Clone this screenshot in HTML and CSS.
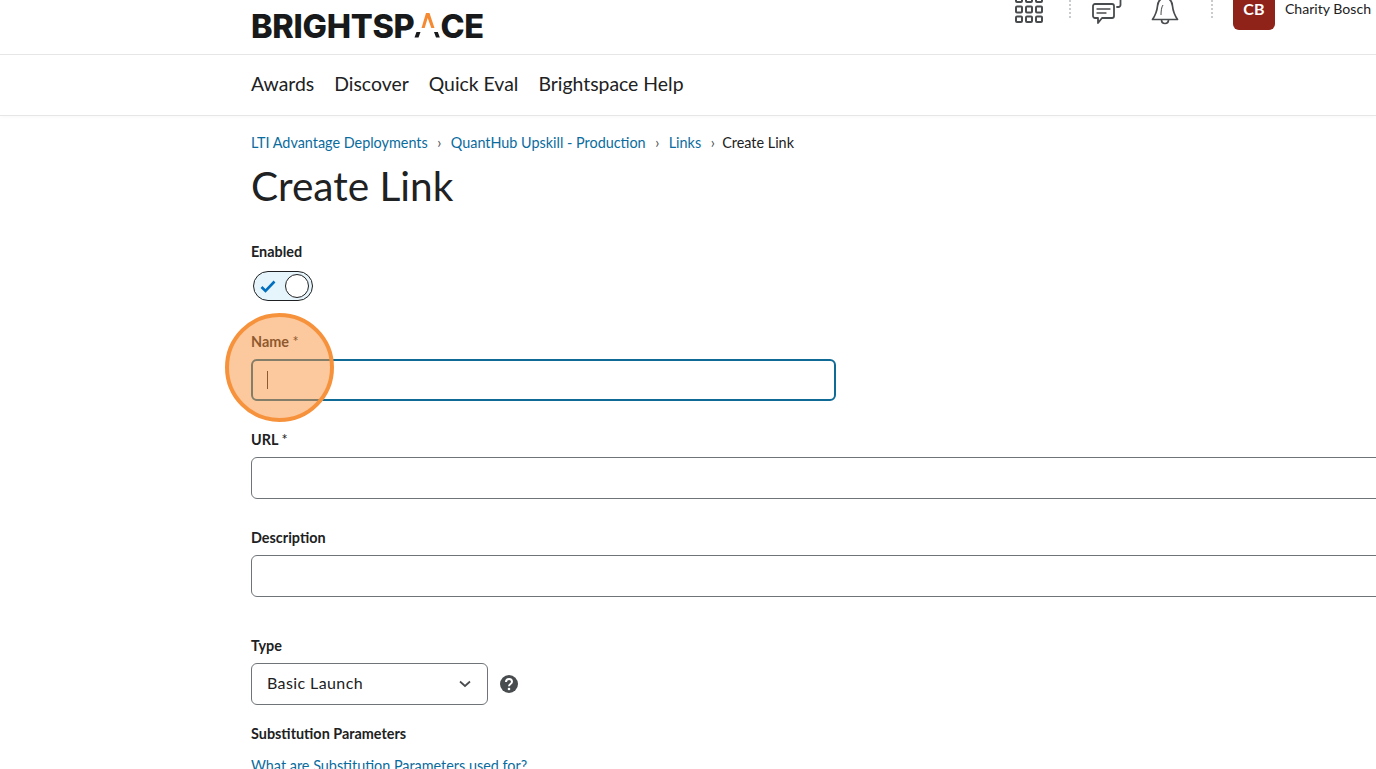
FILE: index.html
```html
<!DOCTYPE html>
<html lang="en">
  <head>
    <meta charset="UTF-8" />
    <meta name="viewport" content="width=device-width, initial-scale=1.0" />
    <title>Create Link</title>
    <link rel="stylesheet" href="styles.css">
  </head>
  <body>
    <header class="topbar">
      <div class="logo">
        <span>BRIGHTSP</span>
        <svg class="logo-a" width="26" height="26" viewBox="0 0 26 26" aria-hidden="true">
          <path d="M12 0h3.500l5 15h-3.200L13.700 5 10.700 15H7.500z" fill="#f58a33" />
          <path d="M2.500 19h4l-2 5.500H.5zM20 19h3.800l2 5.500H22z" fill="#17191a" />
        </svg>
        <span>CE</span>
      </div>
      <div class="tools">
        <svg class="tool-grid" width="28" height="24" viewBox="0 0 28 24" fill="none" stroke="#494c4e" stroke-width="2" aria-hidden="true">
          <rect x="1" y="-4" width="6" height="6" rx="1" /><rect x="11" y="-4" width="6" height="6" rx="1" /><rect x="21" y="-4" width="6" height="6" rx="1" />
          <rect x="1" y="6.500" width="6" height="6" rx="1" /><rect x="11" y="6.500" width="6" height="6" rx="1" /><rect x="21" y="6.500" width="6" height="6" rx="1" />
          <rect x="1" y="16.500" width="6" height="5.500" rx="1" /><rect x="11" y="16.500" width="6" height="5.500" rx="1" /><rect x="21" y="16.500" width="6" height="5.500" rx="1" />
        </svg>
        <span class="dots dots-first"></span>
        <svg class="tool-chat" width="32" height="25" viewBox="0 0 32 25" fill="none" stroke="#494c4e" stroke-width="1.800" stroke-linejoin="round" stroke-linecap="round" aria-hidden="true">
          <path d="M4 4h17a2 2 0 0 1 2 2v10a2 2 0 0 1-2 2H11l-4 5v-5H4a2 2 0 0 1-2-2V6a2 2 0 0 1 2-2z" />
          <path d="M6 9h13M6 13h9" stroke-width="1.300" />
          <path d="M29.500 0v5a2 2 0 0 1-2 2H26" />
        </svg>
        <svg class="tool-bell" width="28" height="25" viewBox="0 0 28 25" fill="none" stroke="#494c4e" stroke-width="1.700" stroke-linejoin="round" aria-hidden="true">
          <path d="M14 -2c5 0 7 3 7.500 8 .5 5 2 9 5 13.500H1.500c3-4.500 4.500-8.500 5-13.500C7 1 9 -2 14 -2z" />
          <path d="M10.500 19.500c0 3 1.500 4 3.500 4s3.500-1 3.500-4" />
          <path d="M10 15c0-4 .5-8 2-10" stroke-width="1" />
        </svg>
        <span class="dots dots-second"></span>
        <span class="avatar">CB</span>
        <span class="username">Charity Bosch</span>
      </div>
    </header>

    <nav class="mainnav">
      <a href="#">Awards</a>
      <a href="#">Discover</a>
      <a href="#">Quick Eval</a>
      <a href="#">Brightspace Help</a>
    </nav>

    <main class="content">
      <div class="crumbs">
        <a href="#">LTI Advantage Deployments</a><span class="sep">›</span><a href="#">QuantHub Upskill - Production</a><span class="sep">›</span><a href="#">Links</a><span class="sep">›</span><span class="crumb-current">Create Link</span>
      </div>
      <h1>Create Link</h1>

      <form class="link-form">
        <div class="field field-toggle">
          <label>Enabled</label>
          <div class="toggle">
            <svg width="16" height="13" viewBox="0 0 16 13" fill="none" stroke="#006fbf" stroke-width="2.600" aria-hidden="true">
              <path d="M1.500 7l4 4 9-9.500" />
            </svg>
            <span class="knob"></span>
          </div>
        </div>

        <div class="field">
          <label>Name <span class="req">*</span></label>
          <div class="input input-focus"><span class="caret"></span></div>
        </div>

        <div class="field">
          <label>URL <span class="req">*</span></label>
          <div class="input input-wide"></div>
        </div>

        <div class="field field-desc">
          <label>Description</label>
          <div class="input input-wide"></div>
        </div>

        <div class="field field-type">
          <label>Type</label>
          <div class="type-row">
            <div class="select">
              <span class="select-text">Basic Launch</span>
              <svg width="12" height="8" viewBox="0 0 12 8" fill="none" stroke="#494c4e" stroke-width="1.700" aria-hidden="true">
                <path d="M1 1.500l5 4.500 5-4.500" />
              </svg>
            </div>
            <svg class="help" width="18" height="18" viewBox="0 0 18 18" aria-hidden="true">
              <circle cx="9" cy="9" r="9" fill="#494c4e" />
              <path d="M6 7c0-2 1.400-3 3.100-3S12 5 12 6.800c0 2.300-3 2.200-3 4.400" fill="none" stroke="#fff" stroke-width="2" />
              <circle cx="9" cy="14" r="1.300" fill="#fff" />
            </svg>
          </div>
        </div>

        <div class="field-sub">
          <label>Substitution Parameters</label>
          <a href="#">What are Substitution Parameters used for?</a>
        </div>
      </form>
    </main>

    <div class="spotlight"></div>
  </body>
</html>
```

FILE: styles.css
```css
html,
body {
  height: 100%;
}

body {
  margin: 0;
  overflow: hidden;
  font-family: Lato, "Open Sans", sans-serif;
  color: #202122;
  background: #fff;
}

a {
  color: #0a6c9e;
  text-decoration: none;
}

.topbar {
  height: 54px;
  padding-left: 251px;
  display: flex;
  align-items: flex-start;
  border-bottom: 1px solid #e6e6e6;
  overflow: hidden;
}

.logo {
  display: flex;
  align-items: flex-end;
  height: 38px;
  font-family: Inter, "Liberation Sans", sans-serif;
  font-size: 32.500px;
  font-weight: 800;
  line-height: 33px;
  letter-spacing: -0.3px;
  color: #17191a;
}

.logo span {
  margin-bottom: -5px;
}

.logo-a {
  margin-bottom: -1px;
}

.tools {
  margin-left: auto;
  margin-right: 5px;
  display: flex;
  align-items: flex-start;
}

.dots {
  width: 2px;
  height: 20px;
  background: repeating-linear-gradient(#c9cccf 0 2px, transparent 2px 4px);
}

.dots-first {
  margin: 0 20px 0 26px;
}

.tool-bell {
  margin-left: 28px;
}

.dots-second {
  margin: 0 20px 0 32px;
}

.avatar {
  width: 42px;
  height: 40px;
  margin-top: -10px;
  padding-top: 9px;
  box-sizing: border-box;
  background: #8f2219;
  color: #fff;
  border-radius: 0 0 6px 6px;
  font-size: 16px;
  font-weight: 700;
  text-align: center;
}

.username {
  margin-left: 10px;
  font-size: 14.100px;
  line-height: 18px;
}

.mainnav {
  height: 61px;
  padding: 0 0 4px 251px;
  box-sizing: border-box;
  display: flex;
  align-items: center;
  gap: 20px;
  background: #fff;
  border-bottom: 1px solid #e6e6e6;
  box-shadow: 0 2px 3px rgba(0, 0, 0, 0.02);
}

.mainnav a {
  color: #202122;
  font-size: 19.400px;
}

.content {
  padding: 18px 0 0 251px;
}

.crumbs {
  font-size: 14.400px;
  line-height: 18px;
}

.sep {
  margin: 0 9.500px;
  color: #494c4e;
}

.crumb-current {
  margin-left: -2px;
}

h1 {
  margin: 7px 0 0;
  font-size: 40.600px;
  font-weight: 400;
  line-height: 54px;
}

.link-form {
  margin-top: 30px;
}

label {
  display: block;
  font-size: 14.400px;
  font-weight: 700;
  line-height: 18px;
  margin-bottom: 8px;
}

.req {
  font-weight: 400;
}

.field {
  margin-bottom: 30px;
}

.field-toggle {
  margin-bottom: 32px;
}

.field-toggle label {
  margin-bottom: 10px;
}

.field-desc {
  margin-bottom: 40px;
}

.field-type {
  margin-bottom: 20px;
}

.toggle {
  width: 60px;
  height: 30px;
  margin-left: 2px;
  padding: 0 3px 0 6px;
  box-sizing: border-box;
  display: flex;
  align-items: center;
  justify-content: space-between;
  border: 1px solid #202122;
  border-radius: 15px;
  background: #e6f4fb;
}

.knob {
  width: 22px;
  height: 22px;
  border: 1px solid #202122;
  border-radius: 50%;
  background: #fff;
}

.input {
  height: 42px;
  box-sizing: border-box;
  border: 1px solid #6e7477;
  border-radius: 6px;
  background: #fff;
}

.input-focus {
  width: 585px;
  padding: 10px 0 0 14px;
  border: 2px solid #0f6a96;
}

.input-wide {
  width: 1300px;
}

.caret {
  display: block;
  width: 1px;
  height: 18px;
  background: #202122;
}

.type-row {
  display: flex;
  align-items: center;
  gap: 12px;
}

.select {
  width: 237px;
  height: 42px;
  box-sizing: border-box;
  padding: 0 16px 0 15px;
  display: flex;
  align-items: center;
  justify-content: space-between;
  border: 1px solid #6e7477;
  border-radius: 6px;
  font-size: 16px;
  letter-spacing: 0.4px;
}

.select-text {
  margin-bottom: 3px;
}

.field-sub a {
  display: block;
  margin-top: 14px;
  font-size: 14.400px;
  line-height: 18px;
}

.spotlight {
  position: absolute;
  left: 225px;
  top: 313px;
  width: 109px;
  height: 109px;
  box-sizing: border-box;
  border: 4px solid #f7923c;
  border-radius: 50%;
  background: rgba(250, 145, 60, 0.5);
}
```
